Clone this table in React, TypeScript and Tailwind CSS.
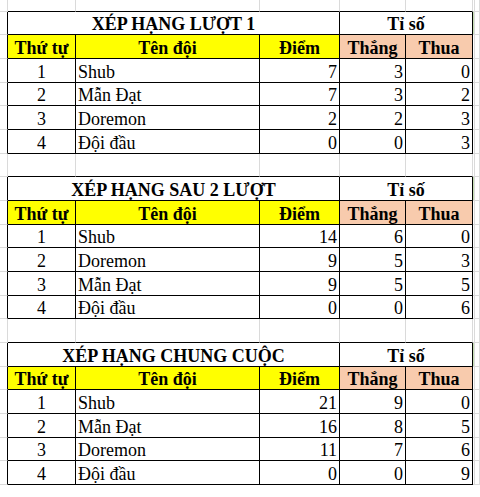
import React from "react";

type Row = [string, string, string, string, string];

const tables: { title: string; rows: Row[] }[] = [
  {
    title: "XÉP HẠNG LƯỢT 1",
    rows: [
      ["1", "Shub", "7", "3", "0"],
      ["2", "Mẫn Đạt", "7", "3", "2"],
      ["3", "Doremon", "2", "2", "3"],
      ["4", "Đội đầu", "0", "0", "3"],
    ],
  },
  {
    title: "XÉP HẠNG SAU 2 LƯỢT",
    rows: [
      ["1", "Shub", "14", "6", "0"],
      ["2", "Doremon", "9", "5", "3"],
      ["3", "Mẫn Đạt", "9", "5", "5"],
      ["4", "Đội đầu", "0", "0", "6"],
    ],
  },
  {
    title: "XÉP HẠNG CHUNG CUỘC",
    rows: [
      ["1", "Shub", "21", "9", "0"],
      ["2", "Mẫn Đạt", "16", "8", "5"],
      ["3", "Doremon", "11", "7", "6"],
      ["4", "Đội đầu", "0", "0", "9"],
    ],
  },
];

const base = "box-border shrink-0 border-r border-b flex items-end leading-[20px] whitespace-nowrap overflow-hidden";

function Spacer({ tall }: { tall: boolean }) {
  const h = tall ? "h-[24px]" : "h-[12px]";
  return (
    <div className={`flex ${h}`}>
      <div className={`${base} w-[8px] border-r-[#dadada] border-b-[#dadada]`} />
      <div className={`${base} w-[68px] border-r-[#dadada] border-b-black`} />
      <div className={`${base} w-[184px] border-r-[#dadada] border-b-black`} />
      <div className={`${base} w-[80px] border-r-[#dadada] border-b-black`} />
      <div className={`${base} w-[66px] border-r-[#dadada] border-b-black`} />
      <div className={`${base} w-[67px] border-r-[#dadada] border-b-black`} />
      <div className={`${base} w-[2px] border-r-[#dadada] border-b-[#dadada]`} />
      <div className={`${base} flex-1 border-r-[#dadada] border-b-[#dadada]`} />
    </div>
  );
}

function Table({ title, rows }: { title: string; rows: Row[] }) {
  return (
    <>
      <div className="flex h-[24px]">
        <div className={`${base} w-[8px] border-r-black border-b-[#dadada]`} />
        <div className={`${base} w-[332px] border-r-black border-b-black justify-center font-bold bg-white`}>
          {title}
        </div>
        <div className={`${base} w-[133px] border-r-black border-b-black justify-center font-bold bg-white`}>
          Tỉ số
        </div>
        <div className={`${base} w-[2px] border-r-[#dadada] border-b-[#dadada] bg-[#c6e0b4]`} />
        <div className={`${base} flex-1 border-r-[#dadada] border-b-[#dadada]`} />
      </div>
      <div className="flex h-[24px]">
        <div className={`${base} w-[8px] border-r-black border-b-[#dadada]`} />
        <div className={`${base} w-[68px] border-r-black border-b-black justify-center font-bold bg-[#ffff00]`}>
          Thứ tự
        </div>
        <div className={`${base} w-[184px] border-r-black border-b-black justify-center font-bold bg-[#ffff00]`}>
          Tên đội
        </div>
        <div className={`${base} w-[80px] border-r-black border-b-black justify-center font-bold bg-[#ffff00]`}>
          Điểm
        </div>
        <div className={`${base} w-[66px] border-r-black border-b-black justify-center font-bold bg-[#f8cbad]`}>
          Thắng
        </div>
        <div className={`${base} w-[67px] border-r-black border-b-black justify-center font-bold bg-[#f8cbad]`}>
          Thua
        </div>
        <div className={`${base} w-[2px] border-r-[#dadada] border-b-[#dadada]`} />
        <div className={`${base} flex-1 border-r-[#dadada] border-b-[#dadada]`} />
      </div>
      {rows.map((r, i) => (
        <div key={i} className="flex h-[24px]">
          <div className={`${base} w-[8px] border-r-black border-b-[#dadada]`} />
          <div className={`${base} w-[68px] border-r-black border-b-black justify-center`}>{r[0]}</div>
          <div className={`${base} w-[184px] border-r-black border-b-black justify-start pl-[2px]`}>{r[1]}</div>
          <div className={`${base} w-[80px] border-r-black border-b-black justify-end pr-[2px]`}>{r[2]}</div>
          <div className={`${base} w-[66px] border-r-black border-b-black justify-end pr-[2px]`}>{r[3]}</div>
          <div className={`${base} w-[67px] border-r-black border-b-black justify-end pr-[2px]`}>{r[4]}</div>
          <div className={`${base} w-[2px] border-r-[#dadada] border-b-[#dadada]`} />
          <div className={`${base} flex-1 border-r-[#dadada] border-b-[#dadada]`} />
        </div>
      ))}
    </>
  );
}

export default function App() {
  return (
    <div className="w-[480px] h-[497px] bg-white overflow-hidden">
      <div
        className="h-[485px] overflow-hidden flex flex-col text-[18px] text-black"
        style={{ fontFamily: '"Liberation Serif", "Times New Roman", "DejaVu Serif", serif' }}
      >
        <Spacer tall={false} />
        <Table {...tables[0]} />
        <Spacer tall />
        <Table {...tables[1]} />
        <Spacer tall />
        <Table {...tables[2]} />
      </div>
    </div>
  );
}
